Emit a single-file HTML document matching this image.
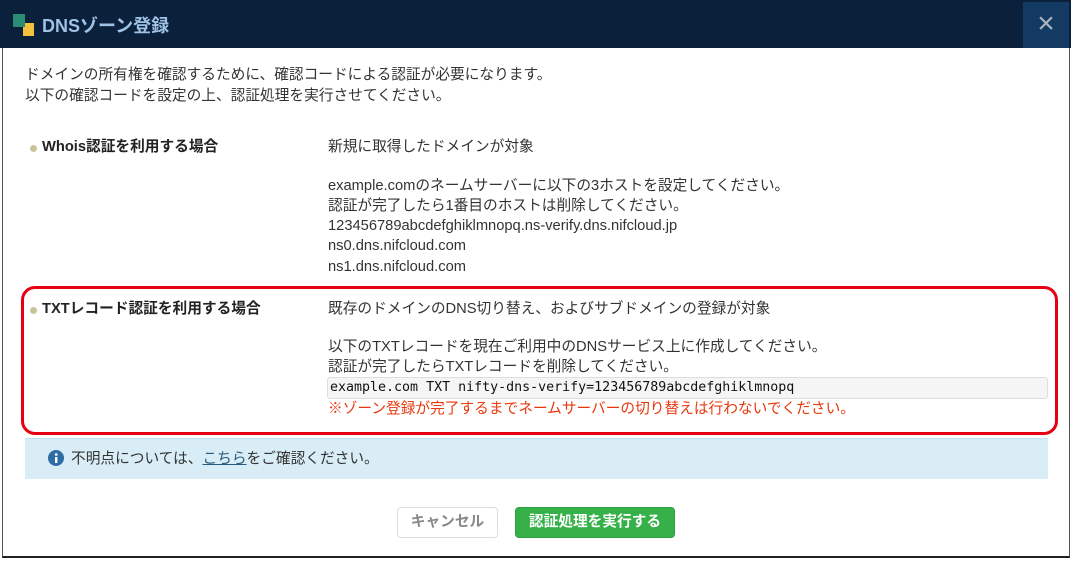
<!DOCTYPE html><html><head><meta charset="utf-8"><style>
*{margin:0;padding:0;box-sizing:border-box}
body{width:1071px;height:561px;background:#fff;font-family:"Liberation Sans","Noto Sans CJK JP",sans-serif;color:#333;font-size:14.7px;position:relative;overflow:hidden}
.hdr{position:absolute;left:0;top:0;width:1071px;height:48px;background:#0b203b}
.close{position:absolute;left:1023px;top:2px;width:46px;height:46px;background:#123a63;color:#aab3bf;font-size:30px;text-align:center;line-height:44px}
.title{position:absolute;left:42px;top:12px;font-size:18px;font-weight:bold;color:#9ec2e6}
.frame{position:absolute;left:2px;top:48px;width:1068px;height:510px;border-left:1px solid #555;border-right:1px solid #555;border-bottom:2px solid #222}
.t{position:absolute;white-space:nowrap;line-height:21px}
.b{font-weight:bold;color:#222}
.dot{position:absolute;width:7px;height:7px;border-radius:50%;background:#c8c39a}
.red{position:absolute;left:21px;top:286px;width:1037px;height:149px;border:3px solid #e60012;border-radius:14px}
.code{position:absolute;left:327px;top:377px;width:721px;height:22px;background:#f5f5f5;border:1px solid #ddd;border-radius:3px;font-family:"DejaVu Sans Mono","Liberation Mono",monospace;font-size:13.3px;padding-left:2px;line-height:20px;color:#111}
.info{position:absolute;left:25px;top:438px;width:1023px;height:41px;background:#d9edf7;border-top:1px solid #bcdff1}
.btn{position:absolute;top:507px;height:31px;border-radius:4px;font-weight:bold;font-size:14.7px;text-align:center;line-height:29px}
</style></head><body>
<div class="hdr"></div>
<svg style="position:absolute;left:13px;top:14px" width="22" height="22"><rect x="0" y="0" width="12" height="13" fill="#2a8c72"/><path d="M10 9h11v13H10z" fill="#f2c23c"/><path d="M10 9h2v4h-2z" fill="#2a8c72"/></svg>
<div class="title">DNSゾーン登録</div>
<div class="close">×</div>
<div class="frame"></div>
<div class="t" style="left:25px;top:65px">ドメインの所有権を確認するために、確認コードによる認証が必要になります。</div>
<div class="t" style="left:25px;top:86px">以下の確認コードを設定の上、認証処理を実行させてください。</div>
<div class="dot" style="left:30px;top:145px"></div>
<div class="t b" style="left:42px;top:137px">Whois認証を利用する場合</div>
<div class="t" style="left:328px;top:137px">新規に取得したドメインが対象</div>
<div class="t" style="left:328px;top:176px">example.comのネームサーバーに以下の3ホストを設定してください。</div>
<div class="t" style="left:328px;top:196px">認証が完了したら1番目のホストは削除してください。</div>
<div class="t" style="left:328px;top:216px">123456789abcdefghiklmnopq.ns-verify.dns.nifcloud.jp</div>
<div class="t" style="left:328px;top:236px">ns0.dns.nifcloud.com</div>
<div class="t" style="left:328px;top:257px">ns1.dns.nifcloud.com</div>
<div class="red"></div>
<div class="dot" style="left:30px;top:307px"></div>
<div class="t b" style="left:42px;top:299px">TXTレコード認証を利用する場合</div>
<div class="t" style="left:328px;top:299px">既存のドメインのDNS切り替え、およびサブドメインの登録が対象</div>
<div class="t" style="left:328px;top:337px">以下のTXTレコードを現在ご利用中のDNSサービス上に作成してください。</div>
<div class="t" style="left:328px;top:357px">認証が完了したらTXTレコードを削除してください。</div>
<div class="code">example.com TXT nifty-dns-verify=123456789abcdefghiklmnopq</div>
<div class="t" style="left:328px;top:399px;color:#e8380d">※ゾーン登録が完了するまでネームサーバーの切り替えは行わないでください。</div>
<div class="info"></div>
<svg style="position:absolute;left:48px;top:450px" width="16" height="16"><circle cx="8" cy="8" r="8" fill="#2e6da4"/><rect x="7" y="7" width="2.4" height="6" fill="#fff"/><circle cx="8.2" cy="4.5" r="1.4" fill="#fff"/></svg>
<div class="t" style="left:71px;top:449px;color:#333">不明点については、<span style="text-decoration:underline;color:#2a5a7a">こちら</span>をご確認ください。</div>
<div class="btn" style="left:397px;width:101px;border:1px solid #ddd;color:#888;background:#fff">キャンセル</div>
<div class="btn" style="left:515px;width:160px;background:#36b14a;color:#fff;border:1px solid #2f9e41">認証処理を実行する</div>
</body></html>
